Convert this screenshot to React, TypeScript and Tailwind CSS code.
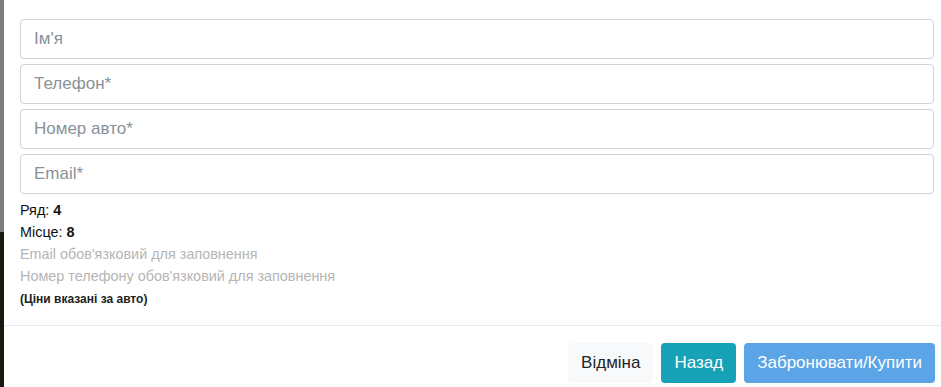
import React from 'react';

const fields = ["Ім'я", 'Телефон*', 'Номер авто*', 'Email*'];

const App: React.FC = () => {
  return (
    <div className="flex h-[387px] w-[941px] overflow-hidden bg-white font-['Liberation_Sans',Arial,sans-serif]">
      {/* backdrop strip */}
      <div className="flex w-[4px] shrink-0 flex-col">
        <div className="h-[232px] bg-[#7b7b7b]" />
        <div className="flex-1 bg-[#1c1611]" />
      </div>

      <div className="flex flex-1 flex-col">
        <div className="flex flex-col pl-4 pr-[7px] pt-[19px]">
          <div className="flex flex-col gap-[5px]">
            {fields.map((f) => (
              <input
                key={f}
                placeholder={f}
                className="h-[40px] w-full rounded-[4px] border border-[#ced4da] px-[13px] text-[17px] text-[#495057] outline-none placeholder:text-[#8a9198]"
              />
            ))}
          </div>

          <div className="mt-[5px] flex flex-col text-[14.4px] leading-[22px]">
            <p className="text-[#111]">
              Ряд: <b>4</b>
            </p>
            <p className="text-[#111]">
              Місце: <b>8</b>
            </p>
            <p className="text-[#b5b5b5]">Email обов'язковий для заповнення</p>
            <p className="text-[#b5b5b5]">Номер телефону обов'язковий для заповнення</p>
            <p className="text-[12px] font-bold leading-[24px] text-[#222]">(Ціни вказані за авто)</p>
          </div>
        </div>

        <div className="mt-[14px] border-t border-[#e9ecef]" />

        <div className="flex justify-end gap-2 pr-[6px] pt-[17px]">
          <button className="h-[40px] rounded-[4px] bg-[#f8f9fa] px-[13px] text-[17px] text-[#212529]">
            Відміна
          </button>
          <button className="h-[40px] rounded-[4px] bg-[#17a2b8] px-[13px] text-[17px] text-white">
            Назад
          </button>
          <button className="h-[40px] rounded-[4px] bg-[#5ba4e6] px-[13px] text-[17px] text-white">
            Забронювати/Купити
          </button>
        </div>
      </div>
    </div>
  );
};

export default App;
